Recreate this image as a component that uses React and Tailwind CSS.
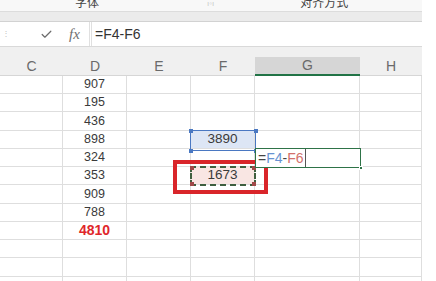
import { Check } from 'lucide-react';

const font = { fontFamily: '"Liberation Sans", "Noto Sans CJK SC", sans-serif' };

const columns = [
  { label: 'C', w: 'w-[63px]' },
  { label: 'D', w: 'w-[64px]' },
  { label: 'E', w: 'w-[64px]' },
  { label: 'F', w: 'w-[64px]' },
  { label: 'G', w: 'w-[105px]' },
  { label: 'H', w: 'w-[62px]' },
];

const rows = [
  { h: 'h-[18px]', d: '907' },
  { h: 'h-[18px]', d: '195' },
  { h: 'h-[19px]', d: '436' },
  { h: 'h-[18px]', d: '898', f: '3890', fBg: 'bg-[#dde6f5]' },
  { h: 'h-[18px]', d: '324' },
  { h: 'h-[18px]', d: '353', f: '1673', fBg: 'bg-[#f9e6e3]' },
  { h: 'h-[19px]', d: '909' },
  { h: 'h-[18px]', d: '788' },
  { h: 'h-[18px]', d: '4810', total: true },
  { h: 'h-[18px]' },
  { h: 'h-[19px]' },
  { h: 'h-[18px]' },
];

const Corner = ({ className }) => (
  <span className={`absolute w-[4px] h-[4px] ${className}`} />
);

const App = () => {
  return (
    <div className="w-[436px] h-[281px] overflow-hidden bg-white text-[#333]" style={font}>
      <div className="w-[422px]">
        {/* ribbon group labels, cut off at the top */}
        <div className="h-[12px] bg-[#f8f8f8] border-b border-[#dcdcdc] flex items-end overflow-hidden text-[12px] leading-[12px] text-[#444]">
          <span className="ml-[75px] mb-[2px]">字体</span>
          <span className="ml-[108px] mb-[3px] text-[8px] leading-[8px] text-[#c8c8c8]">ı◦ı</span>
          <span className="ml-[86px] mb-[2px]">对齐方式</span>
        </div>
        <div className="h-[10px] bg-[#ebebeb] border-b border-[#d2d2d2]" />

        {/* formula bar */}
        <div className="h-[25px] flex items-center bg-white border-b border-[#d9d9d9]">
          <div className="w-[89px] h-full flex items-center">
            <span className="ml-[2px] text-[8px] leading-[8px] text-[#c0c0c0]">⋮</span>
            <Check size={13} strokeWidth={2.2} className="ml-[30px] text-[#6b6b6b]" />
            <span className="ml-[16px] italic text-[15px] text-[#707070]" style={{ fontFamily: '"Liberation Serif", serif' }}>fx</span>
          </div>
          <div className="h-full w-[3px] border-l border-r border-[#e0e0e0]" />
          <span className="ml-[3px] text-[14px] text-[#333]">=F4-F6</span>
        </div>

        {/* column headers */}
        <div className="h-[10px] bg-[#f0f0f0]" />
        <div className="flex h-[19px] bg-[#f0f0f0] text-[14px] text-[#6a6a6a]">
          {columns.map((c) => (
            <div
              key={c.label}
              className={`${c.w} flex items-center justify-center ${
                c.label === 'G' ? 'bg-[#d6d6d6] border-b-2 border-[#217346]' : 'border-b border-[#d6d6d6]'
              }`}
            >
              {c.label}
            </div>
          ))}
        </div>

        {/* grid body */}
        <div className="relative">
          {rows.map((r, i) => (
            <div key={i} className={`flex ${r.h}`}>
              {columns.map((c) => {
                let content = null;
                let extra = '';
                if (c.label === 'D' && r.d) {
                  content = r.total ? (
                    <span className="text-[14px] font-bold text-[#e0262a]">{r.d}</span>
                  ) : (
                    <span className="text-[12.5px] text-[#3a3a3a]">{r.d}</span>
                  );
                }
                if (c.label === 'F' && r.f) {
                  content = <span className="text-[13.5px] text-[#3a3a3a]">{r.f}</span>;
                  extra = r.fBg;
                }
                return (
                  <div
                    key={c.label}
                    className={`${c.w} h-full flex items-center justify-center border-r border-b border-[#dedede] ${extra}`}
                  >
                    {content}
                  </div>
                );
              })}
            </div>
          ))}

          {/* F4 reference highlight */}
          <div className="absolute left-[190px] top-[54px] w-[66px] h-[21px] border-[1.5px] border-[#4a78c2] pointer-events-none">
            <Corner className="-left-[2.5px] -top-[2.5px] bg-[#4a78c2]" />
            <Corner className="-right-[2.5px] -top-[2.5px] bg-[#4a78c2]" />
            <Corner className="-left-[2.5px] -bottom-[2.5px] bg-[#4a78c2]" />
            <Corner className="-right-[2.5px] -bottom-[2.5px] bg-[#4a78c2]" />
          </div>

          {/* F6 reference highlight, dashed */}
          <div className="absolute left-[190px] top-[90px] w-[66px] h-[20px] border-2 border-dashed border-[#3f5f3f] pointer-events-none">
            <Corner className="-left-[2px] -top-[2px] bg-[#a04848]" />
            <Corner className="-right-[2px] -top-[2px] bg-[#a04848]" />
            <Corner className="-left-[2px] -bottom-[2px] bg-[#a04848]" />
            <Corner className="-right-[2px] -bottom-[2px] bg-[#a04848]" />
          </div>

          {/* red annotation box */}
          <div className="absolute left-[173px] top-[84px] w-[95px] h-[34px] border-4 border-[#d9252a] pointer-events-none" />

          {/* G5 cell being edited */}
          <div className="absolute left-[255px] top-[72px] w-[106px] h-[20px] border-[1.5px] border-[#2e7347] bg-white flex items-center">
            <span className="ml-[2px] text-[14px] leading-none">
              <span className="text-[#444]">=</span>
              <span className="text-[#6793d2]">F4</span>
              <span className="text-[#444]">-</span>
              <span className="text-[#d2706c]">F6</span>
            </span>
            <span className="ml-[1px] w-[1px] h-full bg-[#555]" />
            <span className="absolute -right-[3px] -bottom-[3px] w-[4px] h-[4px] bg-[#2e7347] border border-white" />
          </div>
        </div>
      </div>
    </div>
  );
};

export default App;
